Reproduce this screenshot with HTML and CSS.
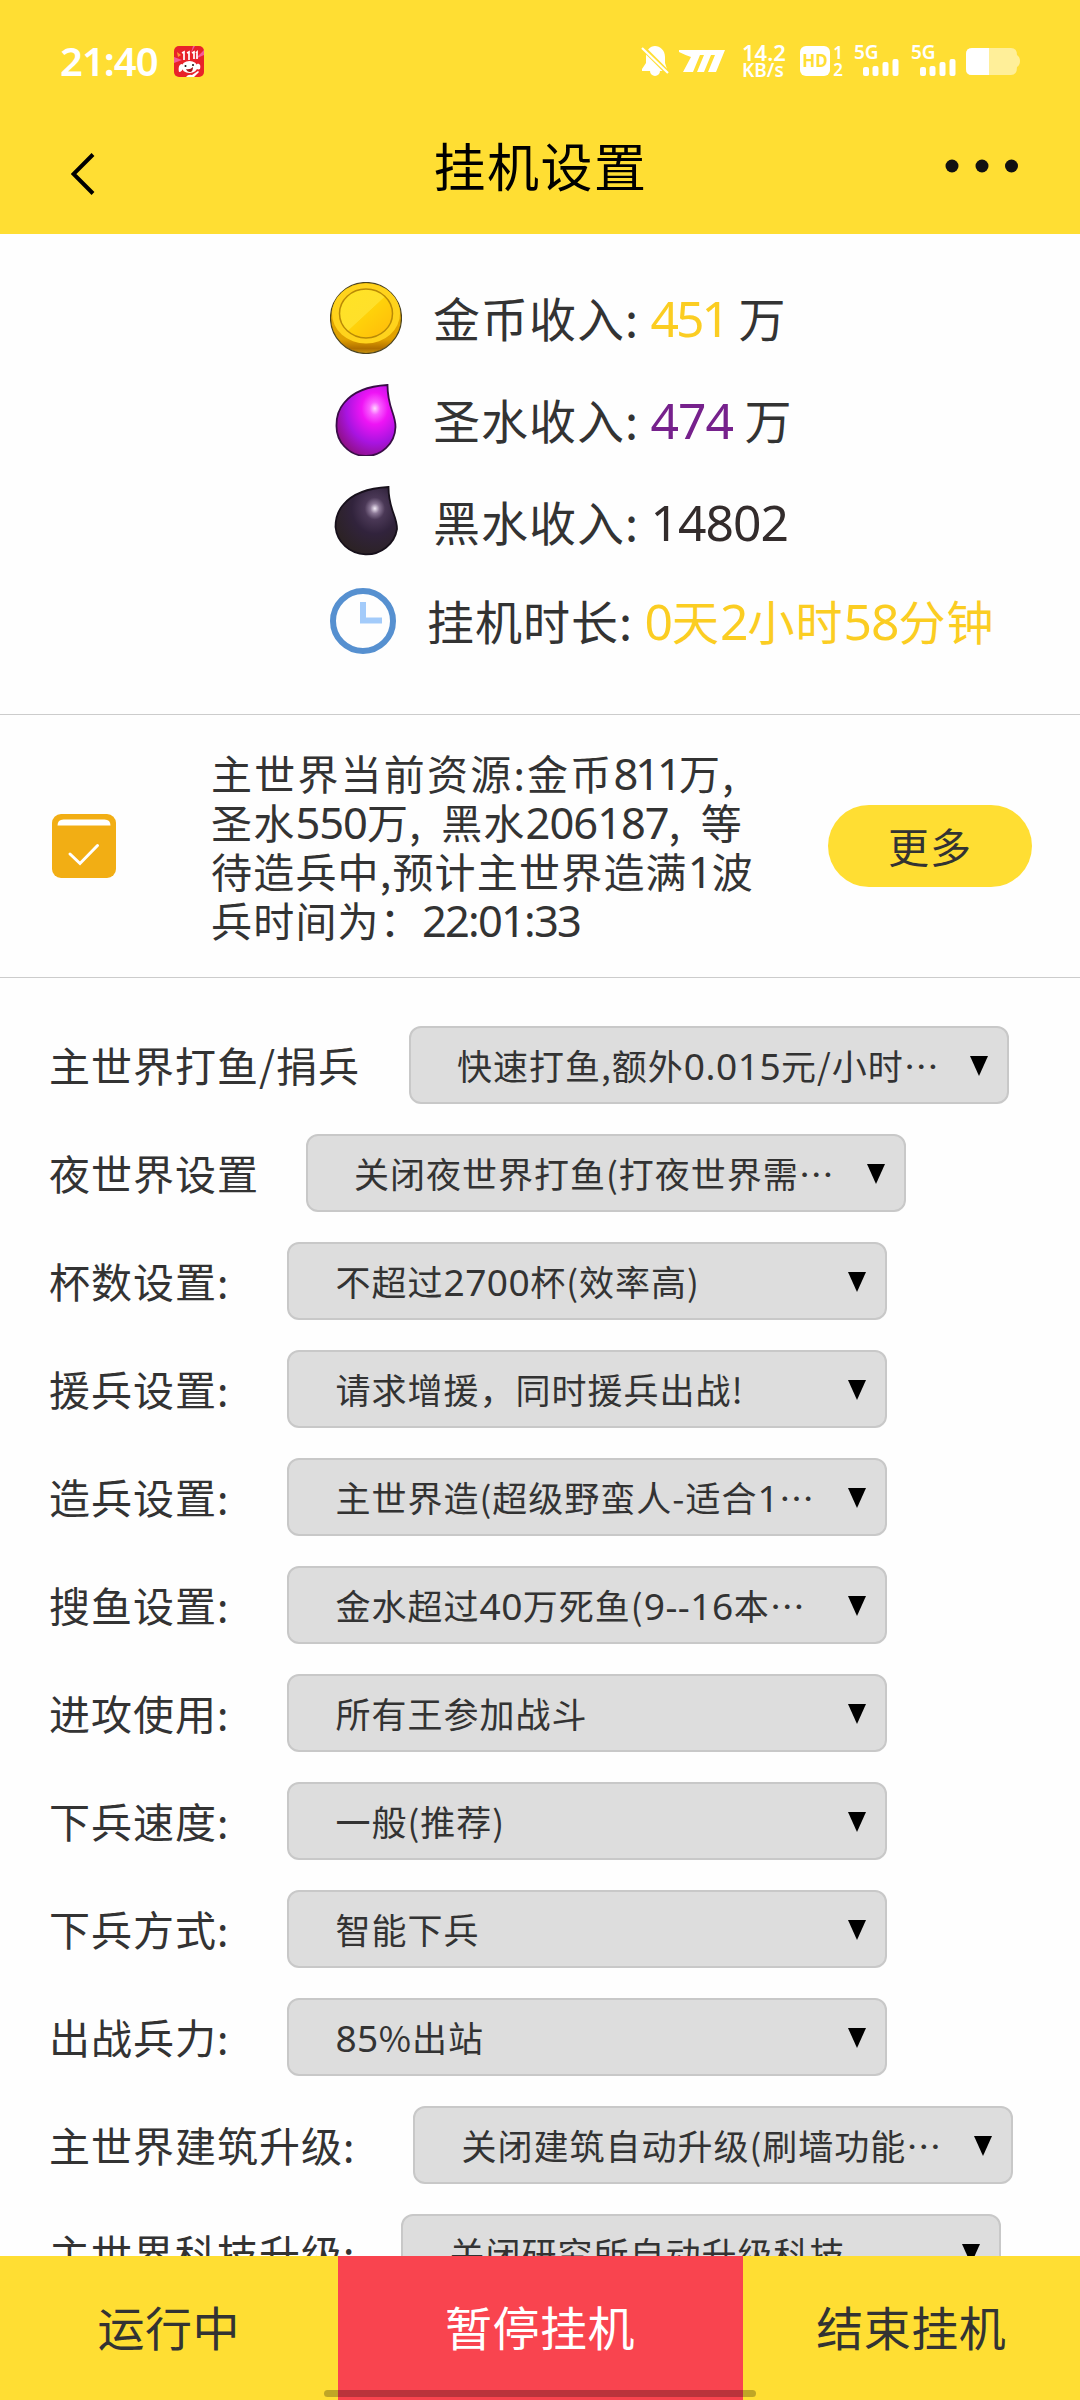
FILE: index.html
```
<!DOCTYPE html>
<html lang="zh-CN">
<head>
    <meta charset="UTF-8">
    <meta name="viewport" content="width=device-width, initial-scale=1.0">
    <title>挂机设置</title>
    <link rel="stylesheet" href="styles.css">
</head>
<body>

<!-- Header Section -->
<div class="header">
    <div class="status-bar">
        <span class="time">21:40</span>
        <svg class="app-icon" width="30" height="31" viewBox="0 0 30 31">
            <rect width="30" height="31" rx="5" fill="#e8222a"/>
            <path d="M0 11 L8 14 L0 17z M30 4 L21 13 L30 9z M19 0 L17 7 L21 0z" fill="#f45a9a"/>
            <path d="M3 6l4 3-3 2z" fill="#ff9a2e"/>
            <path d="M8 7l2-1v8M13 7l2-1v8M18 7l2-1v7M22 7l1-1v7" stroke="#fff" stroke-width="1.7" fill="none"/>
            <ellipse cx="15.500" cy="21" rx="8" ry="6" fill="#fff"/>
            <path d="M8 18c-3 0-4 4-3 8 2 0 4-2 4-5zM23 18c3-1 4 2 3 5-2 1-4 0-4-2z" fill="#fff"/>
            <circle cx="11.500" cy="20" r="1" fill="#111"/>
            <circle cx="19" cy="19" r="1" fill="#111"/>
            <path d="M12 23q4 1 7-2q0 5-3 5t-4-3z" fill="#a3161b"/>
            <path d="M12 31q2-3 6-2l6-4 1 1-5 5z" fill="#fff"/>
        </svg>

        <div class="status-right">
            <svg class="bell" width="28" height="32" viewBox="0 0 28 32">
                <path d="M5 12C5 5 9 1 14 1s10 4 10 11v6l2 6v2h-7a5 5 0 0 1-10 0H1v-2l4-6z" fill="#fff"/>
                <path d="M0 1L28 29" stroke="#ffde33" stroke-width="5"/>
                <path d="M1 3L27 28" stroke="#fff" stroke-width="2.200"/>
            </svg>
            <svg class="m-logo" width="46" height="22" viewBox="0 0 46 22">
                <path d="M0 0h46l-9 22h-8l7-17h-4l-7 17h-7l7-17h-4l-7 17H4l8-15q-6-2-12-5z" fill="#fff"/>
            </svg>
            <div class="net-speed"><span>14.2</span><span>KB/s</span></div>
            <div class="hd">HD</div>
            <div class="sim"><span>1</span><span>2</span></div>
            <div class="signal">
                <span>5G</span>
                <svg width="36" height="17" viewBox="0 0 36 17" fill="#fff">
                    <rect x="0" y="8" width="6" height="9" rx="2"/><rect x="9.500" y="7" width="6" height="10" rx="2"/>
                    <rect x="19.500" y="3" width="6" height="14" rx="2"/><rect x="29.500" y="0" width="6" height="17" rx="2"/>
                </svg>
            </div>
            <div class="signal">
                <span>5G</span>
                <svg width="36" height="17" viewBox="0 0 36 17" fill="#fff">
                    <rect x="0" y="8" width="6" height="9" rx="2"/><rect x="9.500" y="7" width="6" height="10" rx="2"/>
                    <rect x="19.500" y="3" width="6" height="14" rx="2"/><rect x="29.500" y="0" width="6" height="17" rx="2"/>
                </svg>
            </div>
            <svg class="battery" width="54" height="27" viewBox="0 0 54 27">
                <path d="M6 0h39q6 0 6 7q3 2 3 6t-3 6q0 8-6 8H6q-6 0-6-6V6q0-6 6-6z" fill="#fff" opacity=".5"/>
                <path d="M23 0H6Q0 0 0 6v15q0 6 6 6h17z" fill="#fff"/>
            </svg>
        </div>
    </div>

    <div class="nav-bar">
        <svg class="back" width="24" height="42" viewBox="0 0 24 42">
            <path d="M22 1.500L2.500 21L22 40.500" fill="none" stroke="#000" stroke-width="4"/>
        </svg>
        <h1>挂机设置</h1>
        <svg class="more-dots" width="74" height="14" viewBox="0 0 74 14" fill="#111">
            <circle cx="7" cy="7" r="6.500"/><circle cx="37" cy="7" r="6.500"/><circle cx="66.500" cy="7" r="6.500"/>
        </svg>
    </div>
</div>

<!-- Income Section -->
<div class="income">
    <div class="income-row">
        <svg width="72" height="72" viewBox="0 0 72 72">
            <defs>
                <linearGradient id="coinEdge" x1="0" y1="0" x2="0" y2="1">
                    <stop offset="0" stop-color="#e9b400"/><stop offset=".8" stop-color="#e0a000"/><stop offset=".93" stop-color="#b06f00"/><stop offset="1" stop-color="#c99510"/>
                </linearGradient>
                <linearGradient id="coinFace" x1="0" y1="0" x2="1" y2="1">
                    <stop offset="0" stop-color="#ffe325"/><stop offset=".5" stop-color="#ffe02a"/><stop offset=".51" stop-color="#ffd20a"/><stop offset="1" stop-color="#ffb90a"/>
                </linearGradient>
            </defs>
            <circle cx="36" cy="36" r="35.500" fill="url(#coinEdge)" stroke="#4b4320" stroke-width="1.200"/>
            <ellipse cx="36" cy="31.500" rx="34" ry="30" fill="#ffd31c"/>
            <ellipse cx="36" cy="31.500" rx="26.500" ry="24.500" fill="url(#coinFace)" stroke="#b98a06" stroke-width="1.500"/>
        </svg>
        <p>金币收入: <span class="num gold tight">451</span> 万</p>
    </div>
    <div class="income-row">
        <svg width="72" height="72" viewBox="0 0 72 72">
            <defs>
                <radialGradient id="elixir" cx=".65" cy=".33" r=".75">
                    <stop offset="0" stop-color="#ffd8ff"/><stop offset=".12" stop-color="#f95cff"/><stop offset=".3" stop-color="#ee14f5"/><stop offset=".65" stop-color="#a814e0"/><stop offset="1" stop-color="#8d1080"/>
                </radialGradient>
            </defs>
            <path d="M57.500 1C38 2 23 8 14 19C8 26 6.500 33 6.500 41A29.500 30 0 0 0 65.500 43C65.500 29 57.500 24 57.500 1z" fill="url(#elixir)" stroke="#3a0d48" stroke-width="1.800"/>
        </svg>
        <p>圣水收入: <span class="num purple">474</span> 万</p>
    </div>
    <div class="income-row">
        <svg width="72" height="72" viewBox="0 0 72 72">
            <defs>
                <radialGradient id="dark" cx=".64" cy=".32" r=".75">
                    <stop offset="0" stop-color="#f4ecf8"/><stop offset=".1" stop-color="#8a7795"/><stop offset=".22" stop-color="#4a3856"/><stop offset=".5" stop-color="#31233c"/><stop offset="1" stop-color="#2b2222"/>
                </radialGradient>
            </defs>
            <path d="M58.500 1C38 2 22 8 13 19C7 26 5.500 33 5.500 41A31 30 0 0 0 67 43C67 29 58.500 24 58.500 1z" fill="url(#dark)" stroke="#17101b" stroke-width="1.800"/>
        </svg>
        <p>黑水收入: <span class="num dark">14802</span></p>
    </div>
    <div class="income-row">
        <svg width="66" height="66" viewBox="0 0 66 66">
            <circle cx="33" cy="33" r="30" fill="none" stroke="#5690d0" stroke-width="6"/>
            <path d="M33 14v18.500h19" fill="none" stroke="#a3cbfa" stroke-width="6"/>
        </svg>
        <p>挂机时长: <span class="gold"><span class="num">0</span>天<span class="num">2</span>小时<span class="num">58</span>分钟</span></p>
    </div>
</div>

<!-- Current Resource Section -->
<div class="resource">
    <svg class="task-icon" width="64" height="64" viewBox="0 0 64 64">
        <rect width="64" height="64" rx="9" fill="#f2ae14"/>
        <path d="M5.500 11.500q0-6 6-6h41q6 0 6 6z" fill="#fff"/>
        <path d="M18 40l10 9.500L45.500 31.500" fill="none" stroke="#fff" stroke-width="3" stroke-linecap="round"/>
    </svg>
    <p class="resource-text">
        <span class="line spread">主世界当前资源:金币<span class="num tight">811</span>万,</span>
        <span class="line wide-space">圣水<span class="num">550</span>万, 黑水<span class="num">206187</span>, 等</span>
        <span class="line">待造兵中,预计主世界造满<span class="num">1</span>波</span>
        <span class="line">兵时间为：<span class="num clock">22:01:33</span></span>
    </p>
    <button class="more-btn">更多</button>
</div>

<!-- Settings Section -->
<div class="settings">
    <div class="row"><label class="first">主世界打鱼/捐兵</label><div class="select"><span>快速打鱼,额外<span class="num">0.015</span>元/小时…</span><i class="arrow"></i></div></div>
    <div class="row"><label>夜世界设置</label><div class="select"><span>关闭夜世界打鱼(打夜世界需…</span><i class="arrow"></i></div></div>
    <div class="row"><label class="colon">杯数设置:</label><div class="select"><span>不超过<span class="num">2700</span>杯(效率高)</span><i class="arrow"></i></div></div>
    <div class="row"><label class="colon">援兵设置:</label><div class="select"><span>请求增援，同时援兵出战!</span><i class="arrow"></i></div></div>
    <div class="row"><label class="colon">造兵设置:</label><div class="select"><span>主世界造(超级野蛮人-适合<span class="num">1</span>…</span><i class="arrow"></i></div></div>
    <div class="row"><label class="colon">搜鱼设置:</label><div class="select"><span>金水超过<span class="num">40</span>万死鱼(<span class="num">9--16</span>本…</span><i class="arrow"></i></div></div>
    <div class="row"><label class="colon">进攻使用:</label><div class="select"><span>所有王参加战斗</span><i class="arrow"></i></div></div>
    <div class="row"><label class="colon">下兵速度:</label><div class="select"><span>一般(推荐)</span><i class="arrow"></i></div></div>
    <div class="row"><label class="colon">下兵方式:</label><div class="select"><span>智能下兵</span><i class="arrow"></i></div></div>
    <div class="row"><label class="colon">出战兵力:</label><div class="select"><span><span class="num">85</span>%出站</span><i class="arrow"></i></div></div>
    <div class="row"><label class="colon">主世界建筑升级:</label><div class="select"><span>关闭建筑自动升级(刷墙功能…</span><i class="arrow"></i></div></div>
    <div class="row"><label class="last">主世界科技升级:</label><div class="select"><span>关闭研究所自动升级科技</span><i class="arrow"></i></div></div>
</div>

<!-- Bottom Buttons -->
<div class="footer">
    <div class="footer-btn">运行中</div>
    <div class="footer-btn pause">暂停挂机</div>
    <div class="footer-btn">结束挂机</div>
    <div class="home-bar"></div>
</div>

</body>
</html>
```
FILE: styles.css
```
/* Global Styles */
* {
    box-sizing: border-box;
}

body {
    margin: 0;
    width: 1080px;
    height: 2400px;
    overflow: hidden;
    display: flex;
    flex-direction: column;
    background: #fefefe;
    color: #333;
    font-family: "Noto Sans CJK SC", sans-serif;
}

p, h1 {
    margin: 0;
    font-weight: normal;
}

svg {
    display: block;
    flex-shrink: 0;
}

/* Digits inside Chinese text */
.num {
    font-family: "Noto Sans", sans-serif;
    font-size: 1.06em;
    line-height: 0;
    letter-spacing: -1px;
}

.num.tight {
    letter-spacing: -3px;
}

.num.clock {
    letter-spacing: -1.8px;
}

/* Header Styles */
.header {
    height: 234px;
    flex-shrink: 0;
    background: #ffde33;
}

.status-bar {
    height: 122px;
    display: flex;
    align-items: center;
    padding: 0 60px;
    color: #fff;
}

.time {
    font-family: "Noto Sans", sans-serif;
    font-weight: 600;
    font-size: 40px;
    line-height: 48px;
    letter-spacing: -1px;
    width: 114px;
}

.status-right {
    margin-left: auto;
    display: flex;
    align-items: center;
    font-family: "Noto Sans", sans-serif;
    font-weight: 600;
}

.m-logo {
    margin-left: 10px;
}

.net-speed {
    width: 46px;
    margin-left: 17px;
    display: flex;
    flex-direction: column;
    font-size: 22px;
    line-height: 18px;
    white-space: nowrap;
}

.net-speed span:last-child {
    font-size: 19px;
}

.hd {
    width: 30px;
    height: 30px;
    margin-left: 12px;
    border-radius: 6px;
    background: #fff;
    color: #ffde33;
    font-size: 17px;
    font-weight: bold;
    line-height: 29px;
    text-align: center;
}

.sim {
    width: 12px;
    margin-left: 2px;
    display: flex;
    flex-direction: column;
    align-items: center;
    font-size: 17px;
    line-height: 17px;
}

.signal {
    width: 45px;
    height: 30px;
    margin-left: 10px;
    display: flex;
    flex-direction: column;
    align-items: flex-end;
    justify-content: space-between;
    font-size: 19px;
    line-height: 13px;
}

.signal + .signal {
    margin-left: 12px;
}

.signal span {
    align-self: flex-start;
}

.battery {
    margin-left: 10px;
}

.nav-bar {
    height: 92px;
    display: flex;
    align-items: center;
    justify-content: space-between;
    padding: 0 61px 0 71px;
}

.nav-bar h1 {
    margin: 0 0 6px -9px;
    font-size: 52px;
    line-height: 60px;
    letter-spacing: 1.5px;
    color: #000;
}

.back {
    margin: 11px 50px 0 0;
}

.more-dots {
    margin-bottom: 5px;
}

/* Income Styles */
.income {
    height: 480px;
    flex-shrink: 0;
    padding: 48px 0 0 330px;
}

.income-row {
    display: flex;
    align-items: center;
    gap: 31px;
    height: 72px;
    margin-bottom: 30px;
}

.income-row:last-child {
    height: 66px;
}

.income-row p {
    margin-bottom: 3px;
    font-size: 47px;
    line-height: 63px;
    letter-spacing: 1px;
    white-space: nowrap;
}

.gold {
    color: #fbcd22;
}

.purple {
    color: #76218c;
}

.dark {
    color: #332c2c;
}

/* Current Resource Styles */
.resource {
    height: 264px;
    flex-shrink: 0;
    display: flex;
    align-items: center;
    padding: 0 48px 0 52px;
    border-top: 1px solid #ccc;
    border-bottom: 1px solid #ccc;
}

.resource-text {
    margin-left: 95px;
    flex: 1;
    font-size: 41px;
    line-height: 49px;
    letter-spacing: 1.2px;
    white-space: nowrap;
}

.line {
    display: block;
}

.spread {
    letter-spacing: 2.2px;
}

.wide-space {
    word-spacing: 9px;
}

.more-btn {
    width: 204px;
    height: 82px;
    padding: 0 0 3px;
    border: none;
    border-radius: 41px;
    background: #ffde33;
    color: #333;
    font-family: inherit;
    font-size: 41px;
    letter-spacing: 1px;
}

/* Settings Styles */
.settings {
    flex: 1;
    min-height: 0;
    overflow: hidden;
    padding: 48px 0 0 49px;
}

.row {
    display: flex;
    align-items: center;
    height: 78px;
    margin-bottom: 30px;
}

.row label {
    margin: 0 47px 2px 0;
    font-size: 41px;
    line-height: 60px;
    letter-spacing: 1px;
    white-space: nowrap;
}

.row label.first {
    margin-right: 49px;
}

.row label.colon {
    margin-right: 58px;
}

.row label.last {
    margin-right: 46px;
}

.select {
    width: 600px;
    height: 78px;
    display: flex;
    align-items: center;
    justify-content: space-between;
    padding: 0 19px 2px 46px;
    border: 2px solid #c8c8c8;
    border-radius: 12px;
    background: #ddd;
    font-size: 35px;
    letter-spacing: 1px;
    white-space: nowrap;
}

.select .num {
    letter-spacing: 0.5px;
}

.arrow {
    width: 0;
    height: 0;
    margin-top: 4px;
    border-left: 9px solid transparent;
    border-right: 9px solid transparent;
    border-top: 20px solid #000;
}

/* Footer Styles */
.footer {
    position: relative;
    height: 144px;
    flex-shrink: 0;
    display: flex;
}

.footer-btn {
    flex: 1;
    display: flex;
    align-items: center;
    justify-content: center;
    padding-bottom: 5px;
    background: #ffde33;
    font-size: 47px;
    letter-spacing: 0.5px;
}

.footer-btn.pause {
    flex: 0 0 405px;
    background: #f9444f;
    color: #fff;
}

/* System gesture bar over the buttons */
.home-bar {
    position: absolute;
    left: 324px;
    bottom: 3px;
    width: 432px;
    height: 7px;
    border-radius: 4px;
    background: rgba(0, 0, 0, 0.25);
}
```
